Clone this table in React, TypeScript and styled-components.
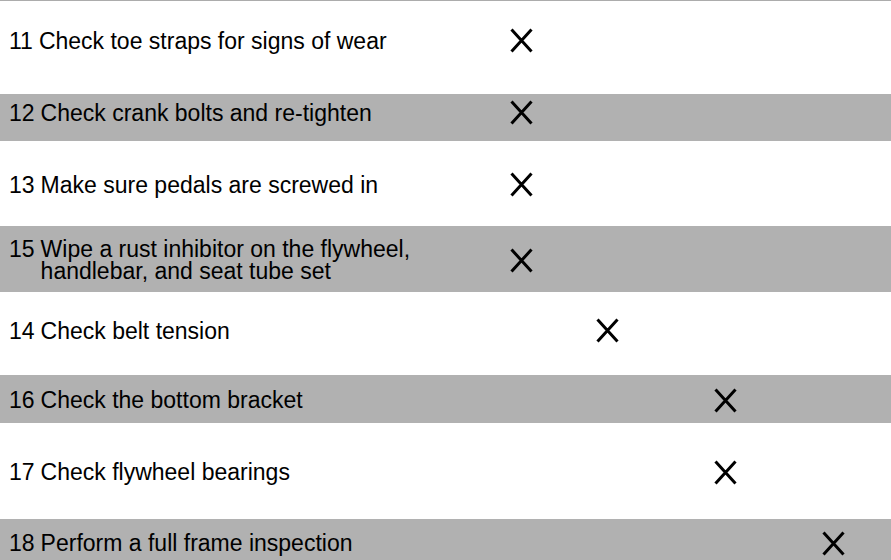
import styled, { createGlobalStyle } from "styled-components";

const GlobalStyle = createGlobalStyle`
  html, body {
    margin: 0;
    padding: 0;
    background: #ffffff;
  }
  body {
    font-family: "Liberation Sans", Arial, sans-serif;
  }
`;

type Task = {
  id: number;
  label: string;
  column: number;
  height: number;
  shift: number;
};

const tasks: Task[] = [
  { id: 11, label: "Check toe straps for signs of wear", column: 0, height: 93, shift: -7 },
  { id: 12, label: "Check crank bolts and re-tighten", column: 0, height: 47, shift: -5 },
  { id: 13, label: "Make sure pedals are screwed in", column: 0, height: 85, shift: 1 },
  {
    id: 15,
    label: "Wipe a rust inhibitor on the flywheel, handlebar, and seat tube set",
    column: 0,
    height: 66,
    shift: 1,
  },
  { id: 14, label: "Check belt tension", column: 1, height: 83, shift: -3 },
  { id: 16, label: "Check the bottom bracket", column: 2, height: 48, shift: 1 },
  { id: 17, label: "Check flywheel bearings", column: 2, height: 96, shift: 1 },
  { id: 18, label: "Perform a full frame inspection", column: 3, height: 48, shift: 0 },
];

const Cross = () => (
  <svg width="23" height="25" viewBox="0 0 23 25">
    <path d="M1.5 1.5 L21.5 23.5 M21.5 1.5 L1.5 23.5" stroke="#000" strokeWidth="3" fill="none" />
  </svg>
);

const App = () => {
  return (
    <>
      <GlobalStyle />
      <Table>
        {tasks.map((task, index) => (
          <Row key={task.id} $shaded={index % 2 === 1} $height={task.height} $shift={task.shift}>
            <TaskCell>
              <Num>{task.id}</Num>
              <Label>{task.label}</Label>
            </TaskCell>
            {[0, 1, 2, 3].map((col) => (
              <MarkCell key={col}>{task.column === col && <Cross />}</MarkCell>
            ))}
          </Row>
        ))}
      </Table>
    </>
  );
};

const Table = styled.div`
  width: 100%;
  border-top: 1px solid #acacac;
`;

const Row = styled.div<{ $shaded: boolean; $height: number; $shift: number }>`
  display: grid;
  grid-template-columns: 478px 86px 86px 150px 66px;
  align-items: center;
  box-sizing: border-box;
  height: ${(p) => p.$height}px;
  padding-top: ${(p) => (p.$shift > 0 ? p.$shift * 2 : 0)}px;
  padding-bottom: ${(p) => (p.$shift < 0 ? -p.$shift * 2 : 0)}px;
  background: ${(p) => (p.$shaded ? "#b1b1b1" : "#ffffff")};
`;

const TaskCell = styled.div`
  display: flex;
  align-items: flex-start;
  gap: 6px;
  padding-left: 9px;
  padding-right: 40px;
  font-size: 23px;
  line-height: 22px;
  color: #000000;
`;

const Num = styled.span`
  flex-shrink: 0;
`;

const Label = styled.span``;

const MarkCell = styled.div`
  display: flex;
  justify-content: center;
  align-items: center;
`;

export default App;
